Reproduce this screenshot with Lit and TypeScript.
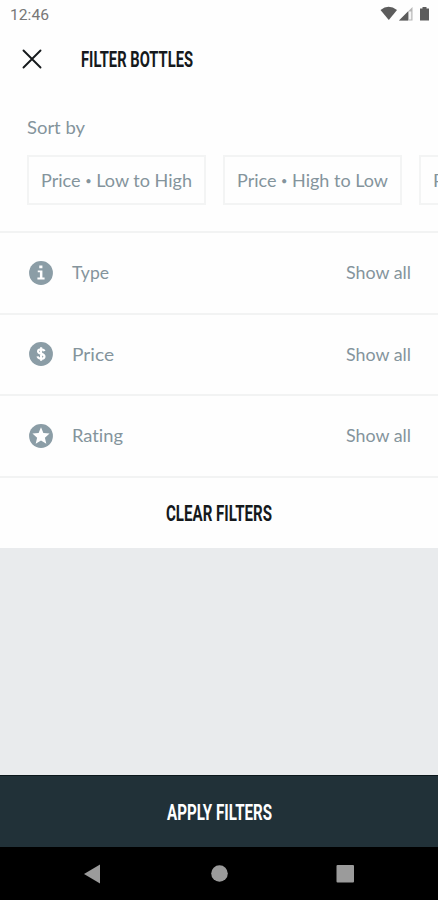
import { LitElement, html, svg, css } from "lit";
import { customElement, property } from "lit/decorators.js";

/** A single line of text fitted to a given advance width. */
@customElement("fit-text")
class FitText extends LitElement {
  @property() label = "";
  @property({ type: Number }) width = 50;
  @property({ type: Number }) height = 24;
  static styles = css`
    :host { display: block; flex: none; line-height: 0; }
    svg { display: block; overflow: visible; }
    text { fill: currentColor; font-variant-ligatures: none; }
    .dot { font-size: 11px; }
  `;
  render() {
    const [before, after] = this.label.split("•");
    const content = after === undefined
      ? svg`${before}`
      : svg`${before}<tspan class="dot" dy="-2">•</tspan><tspan dy="2">${after}</tspan>`;
    return html`<svg width=${this.width} height=${this.height}>
      <text x="0" y=${this.height - 6} textLength=${this.width} lengthAdjust="spacingAndGlyphs">${content}</text>
    </svg>`;
  }
}

const glyphs: Record<string, unknown> = {
  Type: svg`<path d="M10.4 5h2.900v2.500h-2.900zM9 9.600h4.300v6.600h2v1.700H8.700v-1.700h2.300v-4.900H9z" fill="#fff"/>`,
  Price: svg`<path d="M15.200 9.400C14.800 8.200 13.600 7.700 12.100 7.700c-1.700 0-2.800.7-2.800 2 0 2.900 5.900 1.500 5.900 4.500 0 1.400-1.300 2.100-3.100 2.100-1.800 0-3-.7-3.300-2.100M12.100 5.700v12.600" fill="none" stroke="#fff" stroke-width="2"/>`,
  Rating: svg`<path d="M12 4l2.200 5.300 5.700.5-4.300 3.800 1.300 5.600L12 16.200l-4.900 3 1.300-5.600-4.300-3.800 5.700-.5z" fill="#fff"/>`,
};

@customElement("app-root")
class AppRoot extends LitElement {
  static styles = css`
    :host {
      display: flex; flex-direction: column; width: 438px; height: 900px;
      overflow: hidden; box-sizing: border-box; background: #fefefe;
      color: #84949c; font: 400 18px Lato, sans-serif;
    }
    * { box-sizing: border-box; }
    svg { display: block; flex: none; }
    .status { height: 29px; padding: 2px 8px 0 10px; display: flex; justify-content: space-between; flex: none; }
    .time { font: 400 15.500px Roboto, sans-serif; color: #777; }
    .head { height: 59px; padding: 0 22px; display: flex; align-items: center; gap: 39px; flex: none; }
    .title { font: 700 21.500px Roboto, sans-serif; color: #15191c; }
    .sort { height: 145px; padding: 28px 0 0 27px; border-bottom: 2px solid #f2f3f3; flex: none; }
    .chips { display: flex; gap: 17px; margin-top: 15px; }
    .chip { flex: none; width: 179px; height: 50px; padding: 12px 0 0 12px; border: 2px solid #f3f4f4; }
    .row { height: 81.500px; padding: 0 27px 0 28px; display: flex; align-items: center; border-bottom: 2px solid #f2f3f3; flex: none; }
    .row fit-text { margin-top: 1px; }
    .name { margin-left: 18px; }
    .all { margin-left: auto; }
    .clear { height: 70.500px; display: flex; align-items: center; justify-content: center; flex: none; }
    .fill { flex: 1; background: #e9ebed; }
    .apply { height: 72px; background: #213138; border-top: 1px solid #0b171b; display: flex; align-items: center; justify-content: center; flex: none; }
    .apply .title { color: #fff; }
    .nav { height: 53px; background: #000; flex: none; }
  `;

  row(name: string, width: number) {
    return html`<div class="row">
      <svg width="26" height="26" viewBox="0 0 24 24"><circle cx="12" cy="12" r="11" fill="#8b9da6"/>${glyphs[name]}</svg>
      <fit-text class="name" label=${name} width=${width}></fit-text>
      <fit-text class="all" label="Show all" width="65"></fit-text>
    </div>`;
  }

  render() {
    return html`
      <div class="status">
        <fit-text class="time" label="12:46" width="39" height="24"></fit-text>
        <svg width="50" height="24" viewBox="0 0 50 24">
          <path d="M.5 8Q8.500 1.500 17 8L8.800 18z" fill="#5c5c5c"/>
          <path d="M32.500 5v13.500H19z" fill="#b5b5b5"/>
          <path d="M28 9.400V18.500h-9z" fill="#5c5c5c"/>
          <path d="M29 9.500h2.300V17.500H29z" fill="#f4f4f4"/>
          <path d="M42.500 5h4v1.500H49V18.500h-9V6.500h2.500z" fill="#5c5c5c"/>
        </svg>
      </div>
      <div class="head">
        <svg width="20" height="20" viewBox="0 0 20 20"><path d="M1.500 1.500l17 17M18.500 1.500l-17 17" stroke="#15191c" stroke-width="1.900" stroke-linecap="round"/></svg>
        <fit-text class="title" label="FILTER BOTTLES" width="112" height="28"></fit-text>
      </div>
      <div class="sort">
        <fit-text label="Sort by" width="58"></fit-text>
        <div class="chips">
          <div class="chip"><fit-text label="Price • Low to High" width="151"></fit-text></div>
          <div class="chip"><fit-text label="Price • High to Low" width="151"></fit-text></div>
          <div class="chip"><fit-text label="Rating" width="51"></fit-text></div>
        </div>
      </div>
      ${this.row("Type", 37)} ${this.row("Price", 42)} ${this.row("Rating", 51)}
      <div class="clear"><fit-text class="title" label="CLEAR FILTERS" width="106" height="28"></fit-text></div>
      <div class="fill"></div>
      <div class="apply"><fit-text class="title" label="APPLY FILTERS" width="105" height="28"></fit-text></div>
      <div class="nav">
        <svg width="438" height="53" viewBox="0 0 438 53" fill="#9b9b9b">
          <path d="M84 27l16-9.500v19z"/><circle cx="219.500" cy="26.500" r="8.300"/><rect x="336.500" y="18" width="17.500" height="17.500" rx="1"/>
        </svg>
      </div>
    `;
  }
}
